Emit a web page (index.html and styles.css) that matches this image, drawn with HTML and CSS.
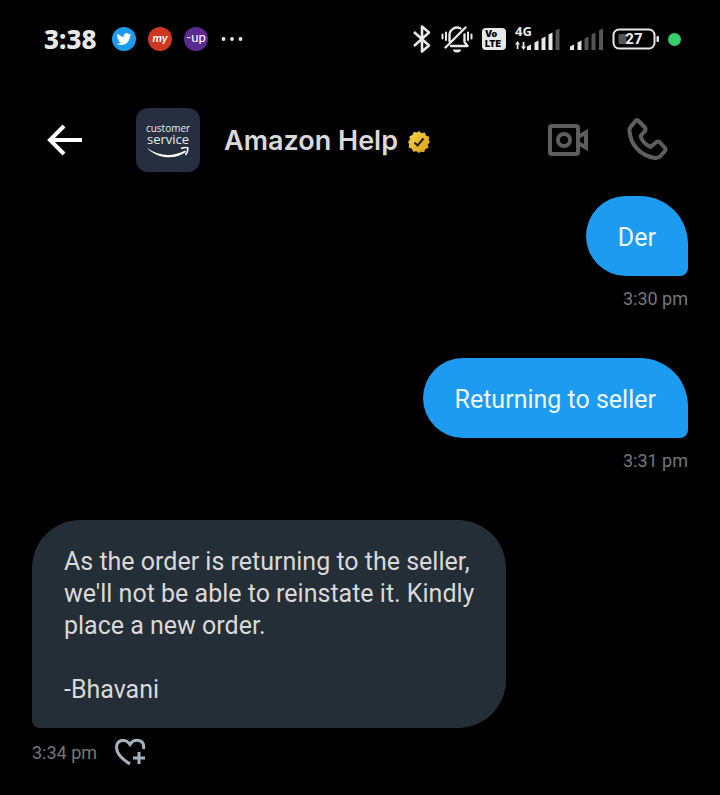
FILE: index.html
```html
<!DOCTYPE html>
<html lang="en">
<head>
    <meta charset="UTF-8">
    <meta name="viewport" content="width=device-width, initial-scale=1.0">
    <title>Amazon Help</title>
    <link rel="stylesheet" href="styles.css">
</head>
<body>
<div class="status-bar">
    <div class="status-left">
        <span class="clock">3:38</span>
        <svg class="app-icon" width="24" height="24" viewBox="0 0 24 24">
            <circle cx="12" cy="12" r="12" fill="#1d9bf0"/>
            <path transform="translate(4.6 4.6) scale(.62)" fill="#fff" d="M23.6 4.9c-.9.4-1.800.6-2.800.8 1-.6 1.800-1.600 2.200-2.700-.9.6-2 1-3.100 1.200a4.900 4.900 0 0 0-8.400 4.500C7.700 8.400 4 6.500 1.700 3.200a4.900 4.900 0 0 0 1.500 6.600c-.8 0-1.600-.2-2.200-.6v.1c0 2.400 1.700 4.400 3.900 4.800-.7.2-1.500.2-2.200.1.600 2 2.400 3.400 4.600 3.400A9.900 9.900 0 0 1 0 19.500a13.900 13.900 0 0 0 7.500 2.200c9.100 0 14-7.500 14-14v-.6c1-.7 1.800-1.600 2.100-2.200z"/>
        </svg>
        <svg class="app-icon" width="24" height="24" viewBox="0 0 24 24">
            <circle cx="12" cy="12" r="12" fill="#cf3721"/>
            <text class="app-my" x="12" y="15">my</text>
        </svg>
        <svg class="app-icon" width="24" height="24" viewBox="0 0 24 24">
            <circle cx="12" cy="12" r="12" fill="#5b2a91"/>
            <text class="app-up" x="12" y="15">-up</text>
        </svg>
        <svg class="more-icon" width="24" height="24" viewBox="0 0 24 24" fill="#e8e8e8">
            <circle cx="3.500" cy="12" r="1.900"/>
            <circle cx="12" cy="12" r="1.900"/>
            <circle cx="20.500" cy="12" r="1.900"/>
        </svg>
    </div>
    <div class="status-right">
        <svg width="20" height="30" viewBox="0 0 20 30" fill="none" stroke="#e8e8e8" stroke-width="2.600" stroke-linejoin="round">
            <path d="M1 8 16 21.500 9 27.500V2.500L16 8.500 1 22"/>
        </svg>
        <svg width="32" height="30" viewBox="0 0 32 30" fill="none" stroke="#e8e8e8" stroke-width="2.400" stroke-linecap="round" stroke-linejoin="round">
            <path d="M8.500 17V11a7.500 7.500 0 0 1 11-6.500M10 22H26.500L23.500 18V10.500M4.500 23.500 24.500 3.500"/>
            <path d="M12 25.500h8a4 3 0 0 1-8 0z" fill="#e8e8e8" stroke="none"/>
            <path stroke-width="2" d="M1.500 10.500v4M5 8.500v7.500M30.500 10.500v4M27 8.500v7.500"/>
        </svg>
        <svg width="26" height="24" viewBox="0 0 26 24">
            <rect x="1" y="1" width="24" height="22" rx="4" fill="#e8e8e8"/>
            <text class="volte" x="4" y="10">Vo</text>
            <text class="volte" x="4" y="20">LTE</text>
        </svg>
        <svg class="signal-main" width="45" height="34" viewBox="0 0 45 34">
            <text class="network" x="0" y="14">4G</text>
            <g fill="#e8e8e8">
                <path d="M2.500 19 0 22.500H1.700V27H3.500V22.500H5zM8.500 28 11 24.500H9.400V20H7.600V24.500H6z"/>
                <path d="M12 24.500l4-2V28h-4zM19.500 20.500l4-2V28h-4zM26.500 16.500l4-2V28h-4zM33.500 12.500l4-2V28h-4z"/>
            </g>
            <path fill="#555" d="M40.500 8.500l4-2V28h-4z"/>
        </svg>
        <svg width="34" height="24" viewBox="0 0 34 24">
            <path fill="#e8e8e8" d="M0 19.500l4-2V23H0zM7.500 15.500l4-2V23h-4z"/>
            <path fill="#555" d="M14.500 11.500l4-2V23h-4zM21.500 7.500l4-2V23h-4zM29 3.500l4-2V23h-4z"/>
        </svg>
        <svg width="48" height="24" viewBox="0 0 48 24">
            <rect x="1.500" y="2.500" width="41" height="19" rx="5.500" fill="none" stroke="#e8e8e8" stroke-width="2"/>
            <rect x="6.500" y="7" width="8" height="10" rx="1.500" fill="#555"/>
            <rect x="44.500" y="9" width="2.500" height="6" rx="1" fill="#e8e8e8"/>
            <text class="battery" x="22" y="17">27</text>
        </svg>
        <span class="privacy-dot"></span>
    </div>
</div>

<header>
    <button class="icon-btn" aria-label="Back">
        <svg width="36" height="32" viewBox="0 0 36 32" fill="none" stroke="#fff" stroke-width="4">
            <path d="M35 16H3M17 2 3 16 17 30"/>
        </svg>
    </button>
    <svg class="avatar" width="64" height="64" viewBox="0 0 64 64">
        <text class="avatar-small" x="32" y="24">customer</text>
        <text class="avatar-big" x="32" y="36">service</text>
        <path fill="#fff" d="M11 40c12 8.500 26 9 38 2.500l1 1.500c-12 8.500-29 6.500-39-4z"/>
        <path fill="none" stroke="#fff" stroke-width="1.600" d="M45 40.500c4-1.300 7-1 7-.5s-.5 4-2.500 7"/>
    </svg>
    <h1>Amazon Help</h1>
    <svg class="badge" width="22" height="22" viewBox="0 0 22 22">
        <defs>
            <linearGradient id="gold" x1="0" y1="0" x2="1" y2="1">
                <stop offset="0" stop-color="#f6d84c"/>
                <stop offset="1" stop-color="#dc9a16"/>
            </linearGradient>
        </defs>
        <path fill="url(#gold)" d="M11 0l2.600 2.200 3.300-.7 1.200 3.200 3.200 1.100-.6 3.400L22 11l-2.100 2.600.6 3.400-3.200 1.100-1.100 3.200-3.400-.6L11 22l-2.600-1.800-3.400.6-1.200-3.200-3.200-1.100.6-3.400L0 11l2-2.500-.6-3.300 3.200-1.200 1.200-3.100 3.300.6z"/>
        <path fill="none" stroke="#211b08" stroke-width="2" d="M6.500 11.500 9.500 14.500 15.500 7.500"/>
    </svg>
    <div class="actions">
        <button class="icon-btn" aria-label="Video call">
            <svg width="42" height="34" viewBox="0 0 42 34" fill="none" stroke="#5e5e5e" stroke-width="4">
                <rect x="3" y="3" width="28" height="28" rx="2"/>
                <circle cx="17" cy="17" r="6"/>
                <path d="M31 14 39 9.500V24.500L31 20"/>
            </svg>
        </button>
        <button class="icon-btn" aria-label="Call">
            <svg width="42" height="44" viewBox="0 0 42 44" fill="none" stroke="#5e5e5e" stroke-width="4" stroke-linejoin="round">
                <path d="M12 2.500 19 9.500Q20 11 19 13L14.500 18C16 23 19 26.500 24.500 29L30.500 24Q32 23 33.500 24L39 30Q40 31.500 39 33L34.500 38Q32.500 40.500 29 40C15 38 4.500 27 3.500 13Q3 10.500 5 8.500L9.500 3Q10.500 1.500 12 2.500z"/>
            </svg>
        </button>
    </div>
</header>

<main class="chat">
    <div class="message sent">
        <div class="bubble">Der</div>
        <div class="meta"><time>3:30 pm</time></div>
    </div>
    <div class="message sent">
        <div class="bubble">Returning to seller</div>
        <div class="meta"><time>3:31 pm</time></div>
    </div>
    <div class="message received">
        <div class="bubble">As the order is returning to the seller,<br>we'll not be able to reinstate it. Kindly<br>place a new order.<br><br>-Bhavani</div>
        <div class="meta">
            <time>3:34 pm</time>
            <button class="icon-btn" aria-label="Add reaction">
                <svg width="32" height="28" viewBox="0 0 32 28" fill="none" stroke="#a3b4bf" stroke-width="3">
                    <path d="M15 26C6 20.500 1.500 15 1.500 9.500 1.500 1.500 11 0 15 6.500 19 0 30 1 28.500 11"/>
                    <path d="M24 14v12M18 20h12"/>
                </svg>
            </button>
        </div>
    </div>
</main>
</body>
</html>
```
FILE: styles.css
```css
body {
    margin: 0;
    background: #000;
    color: #d9d9d9;
    font-family: Roboto, "Liberation Sans", sans-serif;
}
svg {
    display: block;
    flex-shrink: 0;
}
.status-bar {
    display: flex;
    justify-content: space-between;
    align-items: center;
    height: 78px;
    padding: 0 39px 0 44px;
}
.status-left {
    display: flex;
    align-items: center;
    gap: 12px;
}
.clock {
    margin-right: 3px;
    font-family: "Noto Sans", sans-serif;
    font-size: 26px;
    font-weight: 800;
    color: #e8e8e8;
}
.app-my,
.app-up {
    fill: #fff;
    text-anchor: middle;
}
.app-my {
    font: italic bold 12px Lato, sans-serif;
}
.app-up {
    font: 13px Lato, sans-serif;
}
.status-right {
    display: flex;
    align-items: center;
    gap: 8px;
}
.signal-main {
    margin-right: 2px;
}
.volte {
    font: 900 9px Inter, sans-serif;
    fill: #000;
}
.network {
    font: bold 13px "Noto Sans", sans-serif;
    fill: #e8e8e8;
}
.battery {
    font: 800 15px Roboto, sans-serif;
    fill: #e8e8e8;
    text-anchor: middle;
}
.privacy-dot {
    width: 13px;
    height: 13px;
    border-radius: 50%;
    background: #35d06a;
}
header {
    display: flex;
    align-items: center;
    height: 124px;
    margin-bottom: -6px;
    padding: 0 52px 0 47px;
}
.icon-btn {
    padding: 0;
    border: none;
    background: none;
    cursor: pointer;
}
.avatar {
    margin: 0 24px 0 53px;
    border-radius: 12px;
    background: #252f3f;
}
.avatar-small,
.avatar-big {
    font-family: "Open Sans", sans-serif;
    fill: #e8ebef;
    text-anchor: middle;
}
.avatar-small {
    font-size: 10px;
}
.avatar-big {
    font-size: 13px;
}
h1 {
    margin: 0 10px 0 0;
    font-family: Inter, sans-serif;
    font-size: 27px;
    font-weight: 600;
    white-space: nowrap;
}
.badge {
    margin-top: 4px;
}
.actions {
    display: flex;
    align-items: center;
    gap: 37px;
    margin-left: auto;
}
.chat {
    display: flex;
    flex-direction: column;
    gap: 48px;
    padding: 0 32px 24px;
}
.message {
    display: flex;
    flex-direction: column;
    align-items: flex-start;
}
.message.sent {
    align-items: flex-end;
}
.bubble {
    padding: 26px 32px 22px;
    border-radius: 48px 48px 48px 8px;
    background: #242e36;
    font-size: 25px;
    line-height: 32px;
}
.sent .bubble {
    border-radius: 40px 48px 8px 40px;
    background: #1d9bf0;
    color: #eef8ff;
}
.meta {
    display: flex;
    align-items: center;
    gap: 18px;
    height: 24px;
    margin-top: 10px;
    font-size: 18px;
    color: #74767a;
}
.received .meta {
    margin-top: 12px;
}
```
